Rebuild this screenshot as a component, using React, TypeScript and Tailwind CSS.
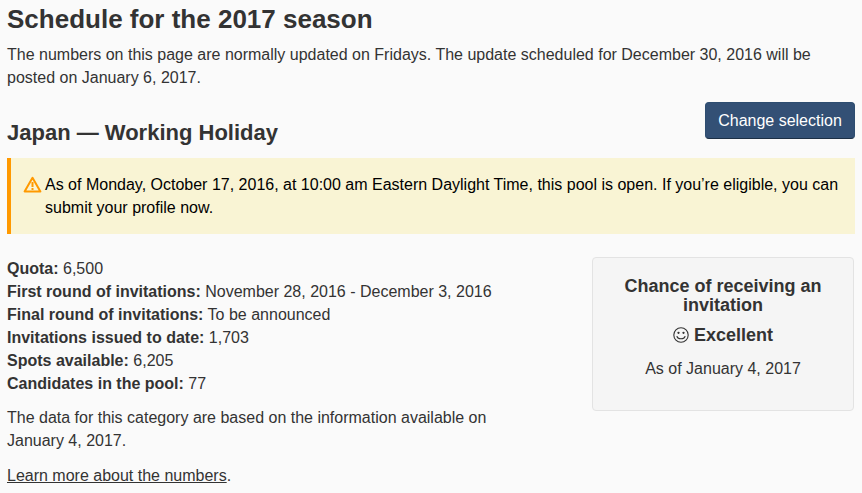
const rows = [
  ["Quota:", "6,500"],
  ["First round of invitations:", "November 28, 2016 - December 3, 2016"],
  ["Final round of invitations:", "To be announced"],
  ["Invitations issued to date:", "1,703"],
  ["Spots available:", "6,205"],
  ["Candidates in the pool:", "77"],
];

const App = () => {
  return (
    <div className="h-[493px] overflow-hidden bg-[#fafafa] px-[7px] font-['Liberation_Sans',Arial,sans-serif] text-base leading-[23px] text-[#333]">
      <h1 className="pt-[4px] text-[26px] leading-[30px] font-bold">Schedule for the 2017 season</h1>
      <p className="mt-[9px]">
        The numbers on this page are normally updated on Fridays. The update scheduled for December 30, 2016 will be
        posted on January 6, 2017.
      </p>

      {/* heading + button */}
      <div className="mt-[2px] flex items-end justify-between">
        <h2 className="mb-[-7px] text-[22px] leading-[26px] font-bold">Japan — Working Holiday</h2>
        <button className="mt-[11px] h-[37px] w-[150px] rounded-[4px] border border-[#2e4d70] border-b-[#1c2f45] bg-[#335075] text-white">
          Change selection
        </button>
      </div>

      {/* alert */}
      <div className="mt-[19px] h-[76px] border-l-4 border-l-[#ff9900] bg-[#f9f4d4] pt-[15px] pr-[10px] pl-[34px] text-black">
        <div className="relative">
          <svg className="absolute top-[3px] left-[-22px]" width="19" height="17" viewBox="0 0 19 17" fill="none">
            <path d="M9.5 1.8 1.6 15.5h15.8z" stroke="#ff9900" strokeWidth="2" strokeLinejoin="round" />
            <path d="M9.5 6v5" stroke="#ff9900" strokeWidth="2" />
            <path d="M9.5 12v2" stroke="#ff9900" strokeWidth="2" />
          </svg>
          <p>
            As of Monday, October 17, 2016, at 10:00 am Eastern Daylight Time, this pool is open. If you’re eligible, you can
            submit your profile now.
          </p>
        </div>
      </div>

      <div className="flex justify-between">
        {/* details */}
        <div className="w-[520px] pt-[23px]">
          {rows.map(([label, value]) => (
            <div key={label}>
              <strong>{label}</strong> {value}
            </div>
          ))}
          <p className="mt-[11px]">The data for this category are based on the information available on January 4, 2017.</p>
          <p className="mt-[12px]">
            <a className="underline" href="#">
              Learn more about the numbers
            </a>
            .
          </p>
        </div>

        {/* card */}
        <div className="mt-[23px] mr-[1px] h-[154px] w-[262px] rounded-[4px] border border-[#e3e3e3] bg-[#f5f5f5] px-[19px] pt-[19px] text-center">
          <div className="text-[18px] leading-[19px] font-bold">Chance of receiving an invitation</div>
          <div className="mt-[10px] flex items-center justify-center gap-[5px] text-[18px] leading-[20px] font-bold">
            <svg width="16" height="16" viewBox="0 0 16 16" fill="none" stroke="#333" strokeWidth="1.1">
              <circle cx="8" cy="8" r="7.2" />
              <circle cx="5.5" cy="5.8" r="0.6" fill="#333" />
              <circle cx="10.5" cy="5.8" r="0.6" fill="#333" />
              <path d="M4 9.5c1 3 7 3 8 0" strokeLinecap="round" />
            </svg>
            Excellent
          </div>
          <div className="mt-[12px]">As of January 4, 2017</div>
        </div>
      </div>
    </div>
  );
};

export default App;
